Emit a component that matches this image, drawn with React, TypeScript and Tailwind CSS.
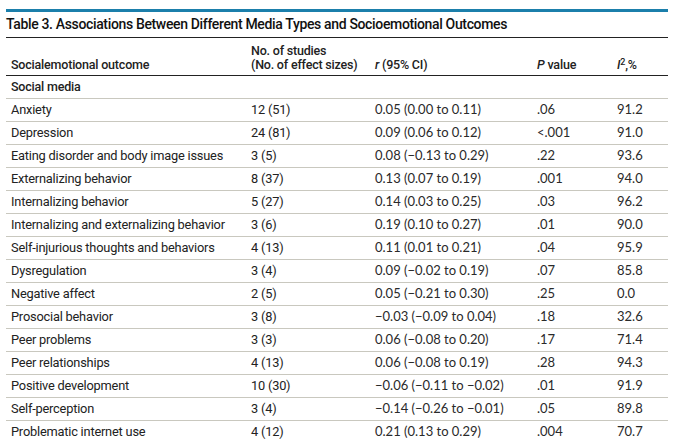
const rows: [string, string, string, string, string][] = [
  ['Anxiety', '12 (51)', '0.05 (0.00 to 0.11)', '.06', '91.2'],
  ['Depression', '24 (81)', '0.09 (0.06 to 0.12)', '<.001', '91.0'],
  ['Eating disorder and body image issues', '3 (5)', '0.08 (−0.13 to 0.29)', '.22', '93.6'],
  ['Externalizing behavior', '8 (37)', '0.13 (0.07 to 0.19)', '.001', '94.0'],
  ['Internalizing behavior', '5 (27)', '0.14 (0.03 to 0.25)', '.03', '96.2'],
  ['Internalizing and externalizing behavior', '3 (6)', '0.19 (0.10 to 0.27)', '.01', '90.0'],
  ['Self-injurious thoughts and behaviors', '4 (13)', '0.11 (0.01 to 0.21)', '.04', '95.9'],
  ['Dysregulation', '3 (4)', '0.09 (−0.02 to 0.19)', '.07', '85.8'],
  ['Negative affect', '2 (5)', '0.05 (−0.21 to 0.30)', '.25', '0.0'],
  ['Prosocial behavior', '3 (8)', '−0.03 (−0.09 to 0.04)', '.18', '32.6'],
  ['Peer problems', '3 (3)', '0.06 (−0.08 to 0.20)', '.17', '71.4'],
  ['Peer relationships', '4 (13)', '0.06 (−0.08 to 0.19)', '.28', '94.3'],
  ['Positive development', '10 (30)', '−0.06 (−0.11 to −0.02)', '.01', '91.9'],
  ['Self-perception', '3 (4)', '−0.14 (−0.26 to −0.01)', '.05', '89.8'],
  ['Problematic internet use', '4 (12)', '0.21 (0.13 to 0.29)', '.004', '70.7'],
];

const cols = 'grid grid-cols-[245px_124px_162px_80px_51px]';
const cond = "font-['Roboto',sans-serif] tracking-[-0.2px]";
const num = "font-['Lato',sans-serif] text-[13px] text-[#2a2a2a]";

export default function App() {
  return (
    <div className="w-[679px] h-[440px] bg-white pl-[6px] pr-[11px] pt-[9px] text-[#222] overflow-hidden">
      <div className="h-[3px] bg-[#1b7fab]" />
      <div className="h-[26px] flex items-center border-b border-[#222] text-[14px] font-medium tracking-[-0.35px] text-[#111] font-['Roboto',sans-serif]">
        Table 3. Associations Between Different Media Types and Socioemotional Outcomes
      </div>

      <div className={`${cols} h-[38px] items-end pb-[3px] border-b border-[#222] text-[12.5px] font-medium leading-[14px] ${cond}`}>
        <div className="pl-[5px]">Socialemotional outcome</div>
        <div>No. of studies<br />(No. of effect sizes)</div>
        <div><i>r</i> (95% CI)</div>
        <div><i>P</i> value</div>
        <div><i>I</i><sup className="text-[9px]">2</sup>,%</div>
      </div>

      <div className={`h-[23px] flex items-center pl-[5px] border-b border-[#c9c8bf] text-[12.5px] font-medium ${cond}`}>
        Social media
      </div>

      {rows.map((r) => (
        <div key={r[0]} className={`${cols} h-[23px] items-center border-b border-[#c9c8bf] text-[12.8px]`}>
          <div className={`pl-[5px] ${cond}`}>{r[0]}</div>
          <div className={cond}>{r[1]}</div>
          <div className={num}>{r[2]}</div>
          <div className={num}>{r[3]}</div>
          <div className={num}>{r[4]}</div>
        </div>
      ))}
    </div>
  );
}
